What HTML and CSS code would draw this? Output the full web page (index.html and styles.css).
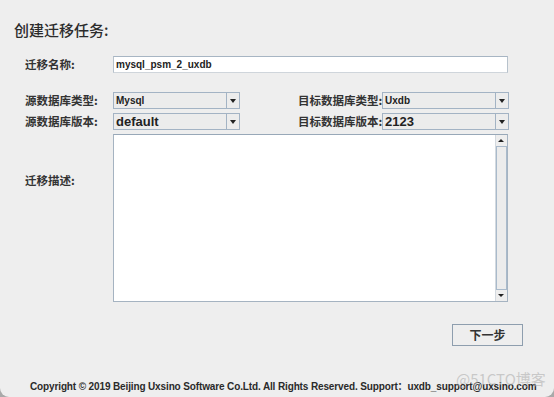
FILE: index.html
```html
<!DOCTYPE html>
<html lang="zh">
<head>
<meta charset="utf-8">
<title>创建迁移任务</title>
<link rel="stylesheet" href="styles.css">
</head>
<body>
<div class="window">
  <h1 class="title">创建迁移任务:</h1>

  <div class="row row-name">
    <label class="lbl">迁移名称:</label>
    <div class="input">mysql_psm_2_uxdb</div>
  </div>

  <div class="row row-combo first">
    <label class="lbl">源数据库类型:</label>
    <div class="combo"><span class="val small">Mysql</span><span class="arrow"></span></div>
    <label class="lbl lbl-right">目标数据库类型:</label>
    <div class="combo"><span class="val small">Uxdb</span><span class="arrow"></span></div>
  </div>

  <div class="row row-combo">
    <label class="lbl">源数据库版本:</label>
    <div class="combo"><span class="val big">default</span><span class="arrow"></span></div>
    <label class="lbl lbl-right">目标数据库版本:</label>
    <div class="combo"><span class="val big">2123</span><span class="arrow"></span></div>
  </div>

  <div class="row row-desc">
    <label class="lbl lbl-desc">迁移描述:</label>
    <div class="textarea">
      <div class="text"></div>
      <div class="vscroll">
        <span class="sbtn up"></span>
        <span class="track"></span>
        <span class="sbtn down"></span>
      </div>
    </div>
  </div>

  <div class="actions">
    <button class="btn">下一步</button>
  </div>

  <footer class="footer">Copyright © 2019 Beijing Uxsino Software Co.Ltd. All Rights Reserved. Support：uxdb_support@uxsino.com</footer>
  <div class="watermark">@51CTO博客</div>
</div>
</body>
</html>
```

FILE: styles.css
```css
* { box-sizing: border-box; }
html, body {
  margin: 0;
  padding: 0;
  width: 554px;
  height: 397px;
  overflow: hidden;
  background: #a9a9a9;
}
.window {
  position: relative;
  width: 554px;
  height: 397px;
  background: #eeeeee;
  border-radius: 0 0 9px 9px;
  font-family: "Noto Sans CJK SC", "DejaVu Sans", sans-serif;
  color: #333;
  overflow: hidden;
}
.title {
  margin: 0;
  padding: 20px 0 0 14px;
  height: 56px;
  font-size: 15px;
  line-height: 20px;
  font-weight: 500;
  color: #2b2b2b;
}
.row {
  display: flex;
  align-items: center;
  padding-left: 25px;
}
.lbl {
  width: 88px;
  flex: none;
  font-size: 11.5px;
  line-height: 17px;
  font-weight: 700;
  color: #333;
  white-space: nowrap;
}
.row-name { height: 17px; }
.input {
  width: 395px;
  height: 17px;
  background: #fff;
  border: 1px solid #b7c2cc;
  border-top-color: #a7b5c3;
  border-bottom-color: #cfd5db;
  font-family: "Liberation Sans", "DejaVu Sans", sans-serif;
  font-weight: 700;
  font-size: 10px;
  line-height: 15px;
  padding-left: 2px;
  color: #222;
}
.row-combo { height: 17px; margin-top: 4px; }
.row-combo.first { margin-top: 19px; }
.combo {
  width: 127px;
  height: 17px;
  flex: none;
  display: flex;
  border: 1px solid #a3b3c4;
  background: #ececec;
}
.val {
  flex: 1;
  font-family: "Liberation Sans", "DejaVu Sans", sans-serif;
  font-weight: 700;
  color: #222;
  padding-left: 2px;
  white-space: nowrap;
  overflow: hidden;
}
.val.small { font-size: 10px; line-height: 15px; }
.val.big { font-size: 13px; line-height: 15px; }
.arrow {
  width: 13px;
  flex: none;
  border-left: 1px solid #a3b3c4;
  position: relative;
}
.arrow::after {
  content: "";
  position: absolute;
  left: 3px;
  top: 6px;
  border-left: 3.5px solid transparent;
  border-right: 3.5px solid transparent;
  border-top: 4px solid #222;
}
.lbl-right {
  width: 84px;
  margin-left: 58px;
}
.row-desc {
  margin-top: 4px;
  align-items: flex-start;
}
.lbl-desc { margin-top: 38px; }
.textarea {
  width: 395px;
  height: 168px;
  display: flex;
  border: 1px solid #a5b3c1;
  border-top-color: #98a8b8;
  background: #fff;
}
.text { flex: 1; }
.vscroll {
  width: 12px;
  flex: none;
  display: flex;
  flex-direction: column;
  background: #eeeeee;
  border-left: 1px solid #d3d9df;
}
.sbtn {
  height: 11px;
  flex: none;
  position: relative;
  background: #eeeeee;
}
.sbtn::after {
  content: "";
  position: absolute;
  left: 2px;
  border-left: 3.5px solid transparent;
  border-right: 3.5px solid transparent;
}
.sbtn.up::after { top: 4px; border-bottom: 3px solid #222; }
.sbtn.down::after { top: 4px; border-top: 3px solid #222; }
.track {
  flex: 1;
  border: 1px solid #a9bacb;
  background: #ececec;
}
.actions {
  display: flex;
  justify-content: flex-end;
  padding-right: 31px;
  margin-top: 22px;
}
.btn {
  width: 71px;
  height: 22px;
  margin: 0;
  padding: 0;
  background: #eeeeee;
  border: 1px solid #8e9eae;
  border-radius: 0;
  font-family: "Noto Sans CJK SC", "DejaVu Sans", sans-serif;
  font-size: 12px;
  font-weight: 700;
  line-height: 20px;
  color: #333;
}
.footer {
  margin-top: 34px;
  padding-left: 30px;
  font-family: "Liberation Sans", "Noto Sans CJK SC", sans-serif;
  font-size: 10px;
  font-weight: 700;
  line-height: 14px;
  color: #2a2a2a;
  white-space: nowrap;
  letter-spacing: -0.13px;
}
.watermark {
  position: absolute;
  left: 456px;
  top: 370px;
  font-family: "Noto Sans CJK SC", "DejaVu Sans", sans-serif;
  font-size: 15px;
  line-height: 18px;
  color: rgba(175, 175, 175, 0.6);
  white-space: nowrap;
}
```
